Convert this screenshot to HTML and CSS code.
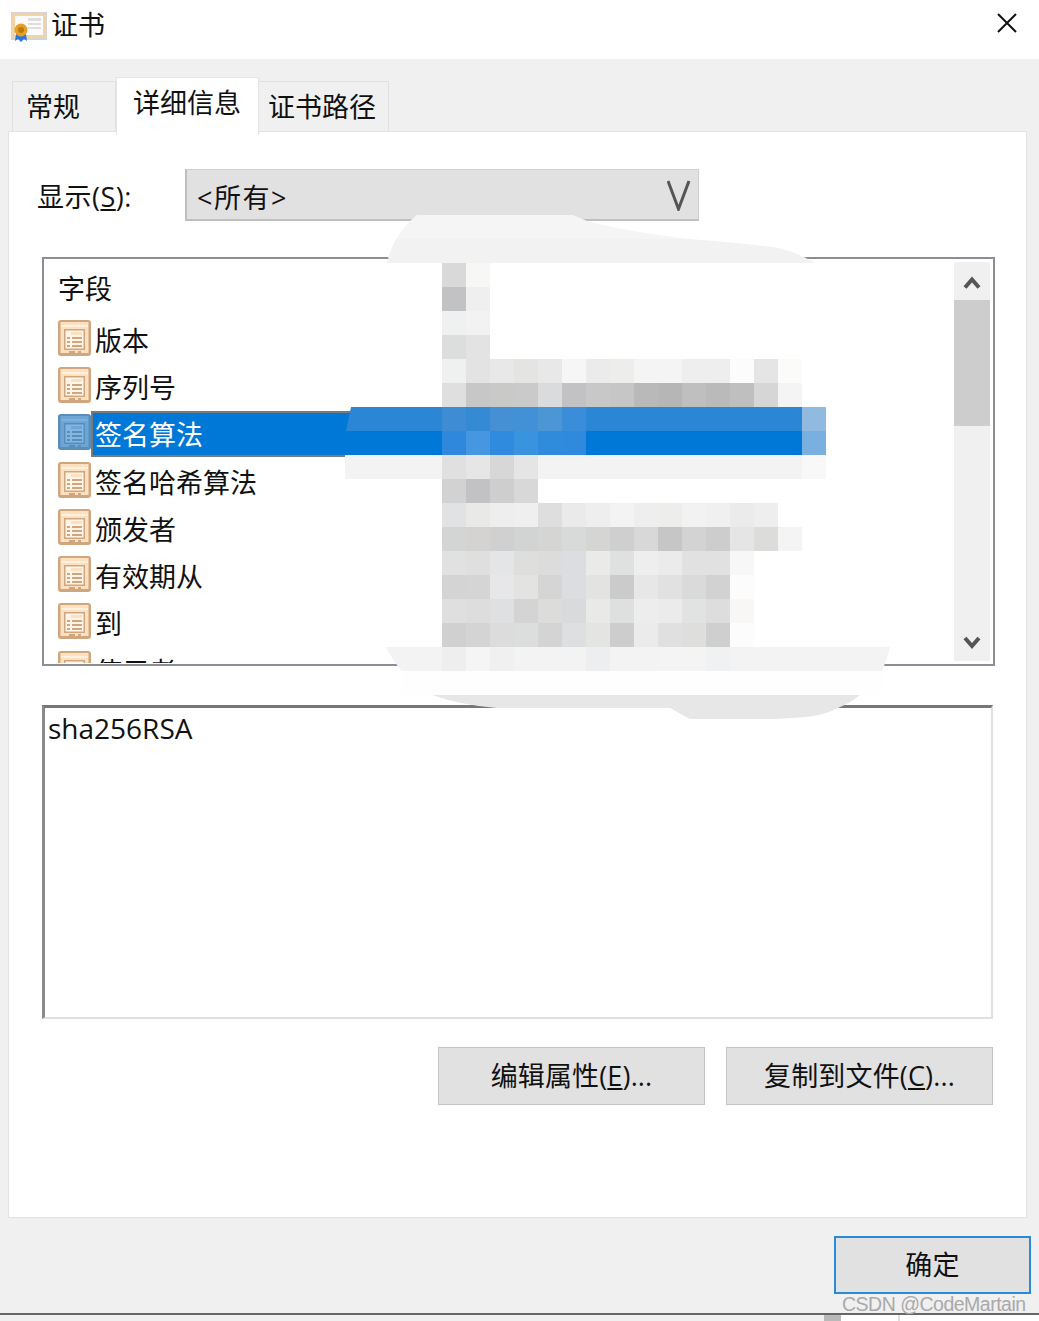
FILE: index.html
```html
<!DOCTYPE html>
<html lang="zh-CN">
<head>
<meta charset="UTF-8">
<title>证书</title>
<link rel="stylesheet" href="styles.css">
</head>

<body>

<svg class="defs" width="0" height="0">
  <symbol id="field" viewBox="0 0 33 36">
    <rect x="0" y="0" width="33" height="36" rx="3" class="f-edge"/>
    <rect x="2.500" y="2" width="28" height="31" class="f-back"/>
    <rect x="3" y="5" width="27" height="2" class="f-light"/>
    <rect x="6" y="9" width="21" height="21" class="f-edge"/>
    <rect x="7.500" y="10.500" width="18" height="18" class="f-page"/>
    <rect x="13" y="12" width="11" height="3" class="f-back"/>
    <rect x="9" y="17" width="3" height="2" class="f-edge"/>
    <rect x="14" y="17" width="10" height="2" class="f-edge"/>
    <rect x="9" y="21" width="3" height="2" class="f-edge"/>
    <rect x="14" y="21" width="10" height="2" class="f-edge"/>
    <rect x="9" y="25" width="3" height="2" class="f-edge"/>
    <rect x="14" y="25" width="10" height="2" class="f-edge"/>
    <rect x="11" y="31" width="6" height="3" class="f-edge"/>
    <rect x="20" y="31" width="3" height="3" class="f-edge"/>
  </symbol>
</svg>

<div class="titlebar">
  <svg class="cert" viewBox="0 0 36 30">
    <rect x="0" y="0" width="36" height="28" fill="#d4d4d4"/>
    <rect x="1" y="1" width="34" height="25" fill="#f3d3a6"/>
    <rect x="4" y="4" width="28" height="19" fill="#fbfbfb"/>
    <rect x="17" y="6" width="13" height="3" fill="#dedede"/>
    <rect x="17" y="11" width="13" height="2" fill="#dedede"/>
    <rect x="17" y="15" width="13" height="2" fill="#dedede"/>
    <path d="M5 22l-1 7 3-2 3 3 3-3 3 2-1-7z" fill="#2f74dc"/>
    <circle cx="10" cy="18" r="6.500" fill="#e3a11f"/>
    <circle cx="10" cy="18" r="3" fill="#b9791a"/>
  </svg>
  <span class="wintitle">证书</span>
  <svg class="close" viewBox="0 0 20 20"><path d="M1 1l18 18M19 1L1 19"/></svg>
</div>

<div class="tabs">
  <div class="tab first">常规</div>
  <div class="tab active">详细信息</div>
  <div class="tab last">证书路径</div>
</div>

<div class="panel">
  <div class="showrow">
    <span class="showlabel">显示(<u>S</u>):</span>
    <div class="select">
      <span>&lt;所有&gt;</span>
      <svg class="vee" viewBox="0 0 24 32"><path d="M1 2l10.500 28L22 2"/></svg>
    </div>
  </div>

  <div class="listbox">
    <div class="fields">
      <div class="head">字段</div>
      <div class="row"><svg class="ficon"><use href="#field"/></svg><span>版本</span></div>
      <div class="row"><svg class="ficon"><use href="#field"/></svg><span>序列号</span></div>
      <div class="row sel"><svg class="ficon"><use href="#field"/></svg><span>签名算法</span></div>
      <div class="row"><svg class="ficon"><use href="#field"/></svg><span>签名哈希算法</span></div>
      <div class="row"><svg class="ficon"><use href="#field"/></svg><span>颁发者</span></div>
      <div class="row"><svg class="ficon"><use href="#field"/></svg><span>有效期从</span></div>
      <div class="row"><svg class="ficon"><use href="#field"/></svg><span>到</span></div>
      <div class="row"><svg class="ficon"><use href="#field"/></svg><span>使用者</span></div>
    </div>
    <div class="scrollbar">
      <svg class="arrow" viewBox="0 0 36 38"><path d="M11 25.500l7-8 7 8"/></svg>
      <div class="thumb"></div>
      <div class="track"></div>
      <svg class="arrow" viewBox="0 0 36 38"><path d="M11 15l7 8 7-8"/></svg>
    </div>
  </div>

  <div class="detail">sha256RSA</div>

  <div class="actions">
    <button>编辑属性(<u>E</u>)...</button>
    <button>复制到文件(<u>C</u>)...</button>
  </div>
</div>

<div class="footer">
  <button class="ok">确定</button>
</div>

<div class="bottombar">
  <div class="bb-left"></div>
  <div class="bb-block"></div>
  <div class="bb-mid"></div>
  <div class="bb-right"></div>
</div>

<!-- redaction smears painted over the dialog -->
<svg class="smear" viewBox="0 0 1039 1321">
  <path fill="#f5f5f5" d="M396 239Q404 225 417 215L573 215L587 221Q615 229 673 237L690 239Z"/>
  <path fill="#f2f2f2" d="M396 239L690 239Q740 243 773 247Q795 251 815 263L387 263Q390 250 396 239Z"/>
  <path fill="#2b87d5" d="M351 407L826 407L826 431L346 431Z"/>
  <rect fill="#0078d7" x="345" y="431" width="481" height="24"/>
  <rect fill="#f3f3f3" x="345" y="455" width="481" height="24"/>
  <path fill="#f3f3f3" d="M386 647L890 647Q887 660 882 671L402 671Q392 660 386 647Z"/>
  <rect fill="#fefefe" x="402" y="671" width="480" height="24"/>
  <path fill="#e7e7e7" d="M432 695L860 695Q850 703 838 708Q822 716 806 717L776 719L690 719L670 708L497 708Q460 705 432 695Z"/>
</svg>
<div class="mosaic" id="mosaic"></div>

<div class="watermark">CSDN @CodeMartain</div>

<script src="mosaic.js"></script>

</body>
</html>
```

FILE: styles.css
```css
body{
  margin:0;
  width:1039px;
  height:1321px;
  overflow:hidden;
  position:relative;
  background:#f0f0f0;
  font-family:"Open Sans","Noto Sans CJK SC",sans-serif;
  font-size:27px;
  color:#111;
}

.defs{
  position:absolute;
}

.titlebar{
  height:59px;
  box-sizing:border-box;
  background:#fff;
  display:flex;
  align-items:flex-start;
  padding:12px 22px 0 11px;
}

.cert{
  width:36px;
  height:30px;
}

.wintitle{
  margin-left:4px;
  margin-top:-7px;
  line-height:40px;
}

.close{
  margin-left:auto;
  margin-top:1px;
  width:20px;
  height:20px;
  fill:none;
  stroke:#111;
  stroke-width:2;
}

.tabs{
  height:72px;
  box-sizing:border-box;
  padding-left:12px;
  display:flex;
  align-items:flex-end;
}

.tab{
  width:130px;
  height:50px;
  box-sizing:border-box;
  border:1px solid #e0e0e0;
  border-bottom:none;
  border-left:none;
  text-align:center;
  line-height:50px;
}

.tab.first{
  width:104px;
  border-left:1px solid #e0e0e0;
  text-align:left;
  padding-left:13px;
}

.tab.last{
  text-align:left;
  padding-left:9px;
}

.tab.active{
  width:143px;
  height:58px;
  margin-bottom:-4px;
  padding-right:1px;
  line-height:50px;
  background:#fff;
  border:1px solid #e4e4e4;
  border-bottom:none;
  position:relative;
  z-index:1;
}

.panel{
  margin-left:8px;
  width:1019px;
  height:1087px;
  box-sizing:border-box;
  background:#fff;
  border:1px solid #e3e3e3;
  padding-top:37px;
}

.showrow{
  display:flex;
  align-items:center;
  padding-left:28px;
}

.showlabel{
  width:148px;
  letter-spacing:.5px;
}

.select{
  width:514px;
  height:52px;
  box-sizing:border-box;
  background:#e1e1e1;
  border:1px solid #cfcfcf;
  border-left:2px solid #bfbfbf;
  border-bottom:2px solid #bfbfbf;
  display:flex;
  align-items:center;
  padding:0 7px 0 10px;
  justify-content:space-between;
}

.select span{
  letter-spacing:1.500px;
  margin-top:3px;
}

.vee{
  width:24px;
  height:32px;
  fill:none;
  stroke:#555;
  stroke-width:3;
}

.listbox{
  margin:36px 0 0 33px;
  width:953px;
  height:409px;
  box-sizing:border-box;
  border:2px solid #8b8e97;
  padding:1px;
  display:flex;
  overflow:hidden;
}

.fields{
  flex:1;
  overflow:hidden;
}

.head{
  height:56px;
  box-sizing:border-box;
  padding:9px 0 0 13px;
  line-height:40px;
}

.row{
  height:47.3px;
  display:flex;
  align-items:center;
  padding-left:13px;
  --back:#fde0bf;
  --edge:#d0a67e;
  --light:#fff1e0;
  --page:#fff4e8;
}

.ficon{
  width:33px;
  height:36px;
  flex:none;
  margin-top:-4px;
}

.f-back{fill:var(--back)}
.f-edge{fill:var(--edge)}
.f-light{fill:var(--light)}
.f-page{fill:var(--page)}

.row span{
  margin-left:4px;
  margin-top:2px;
  line-height:40px;
}

.row.sel{
  --back:#6da5d6;
  --edge:#5a8db8;
  --light:#7fb1dc;
  --page:#83b6e0;
}

.row.sel span{
  margin-left:0;
  margin-top:0;
  padding-left:2px;
  width:330px;
  height:42px;
  line-height:44px;
  background:#0078d7;
  color:#fff;
  border:2px solid #7a7a7a;
  border-right:none;
}

.scrollbar{
  width:36px;
  margin:2px 2px 2px 0;
  background:#f0f0f0;
  display:flex;
  flex-direction:column;
}

.arrow{
  width:36px;
  height:38px;
  flex:none;
  fill:none;
  stroke:#555;
  stroke-width:4;
}

.thumb{
  height:126px;
  background:#cdcdcd;
}

.track{
  flex:1;
}

.detail{
  margin:39px 0 0 33px;
  width:951px;
  height:314px;
  box-sizing:border-box;
  border-top:3px solid #777;
  border-left:3px solid #8a8a8a;
  border-right:2px solid #e0e0e0;
  border-bottom:2px solid #e0e0e0;
  padding-left:3px;
  line-height:40px;
  font-size:28px;
}

.actions{
  margin:28px 0 0 33px;
  width:951px;
  display:flex;
  justify-content:flex-end;
  gap:21px;
}

button{
  width:267px;
  height:58px;
  box-sizing:border-box;
  padding:0 0 4px;
  background:#e1e1e1;
  border:1px solid #c4c4c4;
  font:inherit;
  letter-spacing:.15px;
  color:#111;
}

.footer{
  height:95px;
  box-sizing:border-box;
  padding:18px 8px 0 0;
  display:flex;
  justify-content:flex-end;
}

.ok{
  width:197px;
  border:2px solid #2a8ad6;
}

.bottombar{
  height:8px;
  border-top:2px solid #666;
  display:flex;
  background:#fff;
}

.bb-left{
  width:824px;
  background:#f0f0f0;
}

.bb-block{
  width:17px;
  background:#b9b9b9;
}

.bb-mid{
  width:57px;
}

.bb-right{
  width:2px;
  background:#e0e0e0;
}

.smear{
  position:absolute;
  left:0;
  top:0;
  width:1039px;
  height:1321px;
  pointer-events:none;
}

.mosaic{
  position:absolute;
  left:442px;
  top:263px;
  display:grid;
  grid-template-columns:repeat(16,24px);
  grid-auto-rows:24px;
}

.watermark{
  position:absolute;
  left:842px;
  top:1292px;
  font-family:"Liberation Sans",sans-serif;
  font-size:19.5px;
  letter-spacing:-.5px;
  line-height:24px;
  color:#a9a9a9;
  white-space:nowrap;
}
```

FILE: mosaic.js
```js
// colours of the pixelated block, one string per row of 24px cells
let rows=[
 "d9d9d9 f7f7f5",
 "c2c2c4 efefef",
 "eff1f0 f2f2f2",
 "dcdedd e3e3e3",
 "eff1f0 e3e3e3 e8e8e8 e4e4e2 e8e8e8 f6f6f6 ebebeb ededeb f4f4f4 f4f4f4 eeeeee eeeeee fbfcfb e5e5e5 fbfbfa",
 "dfdfdf c6c7c6 c9c9c7 cacaca dadbdc c2c2c4 c8c8c8 c6c6c6 b9b9b9 b6b6b6 bfbfbf bababa bfbfbf d6d6d6 f4f4f4",
 "3e8cd4 358ad4 458fd4 4291d6 4c96d6 3a8dd8 2b87d5 2b87d5 2b87d5 2b87d5 2b87d5 2b87d5 2b87d5 2b87d5 2b87d5 90bae0",
 "2f88dc 4497e0 2f8bdd 3a93df 2f8cdd 2f8add 0078d7 0078d7 0078d7 0078d7 0078d7 0078d7 0078d7 0078d7 0078d7 7ab0e0",
 "e0e0e0 e6e6e6 d7d7d7 e5e5e5 f3f3f3 f3f3f3 f3f3f3 f3f3f3 f3f3f3 f3f3f3 f3f3f3 f3f3f3 f3f3f3 f3f3f3 f3f3f3 f8f8f8",
 "d2d2d2 c2c2c4 cecece d8d8d8",
 "e1e2e4 e9eae8 eeeeee efefef dedede eaeaea eeeeee f3f3f3 eeeeee ededeb f2f2f2 f0f0f0 ebebeb eeeeee",
 "d3d5d5 d4d3d1 d0d0d0 d2d4d4 d5d5d3 d8dad9 d5d5d3 cfcfcf d8d8d8 c6c6c6 d3d3d3 cdcdcd e5e5e5 dcdcda f4f4f4",
 "e1e1e1 dfdfdf e4e5e7 dededc dcdcdc dcdde0 eaeae8 dfe0e0 eeeeee ebebeb e1e1e1 e1e1e1 f7f7f7",
 "d4d4d4 d5d5d5 e7e7e9 e3e3e1 d5d5d5 dcdde0 e3e3e1 cbcbcb e7e7e7 e1e1e1 dadada d2d2d2 fcfcfc",
 "dfdfdf dddddd dfe0e2 d4d4d4 dcdcda d9dadc e9e9e7 dee0df ededed ebebeb e1e3e2 dddddd f8f7f5",
 "d0d0d0 d4d4d4 dcdcdc dcdedd d4d4d4 dedfe1 e4e4e2 cdcdcd ebebeb e0e0e0 dededc cfcfcf fcfcfc",
 "eeeeee f5f5f5 f0f0f0 f3f3f3 f3f3f3 f3f3f3 eceef0 f3f3f3 f3f3f3 f4f4f4 f4f4f4 eff1f3"
];

let box=document.getElementById("mosaic");
rows.forEach(r=>{
 let cells=r.split(" ");
 for(let i=0;i<16;i++){
  let c=document.createElement("div");
  if(cells[i]) c.style.background="#"+cells[i];
  box.appendChild(c);
 }
});
```
